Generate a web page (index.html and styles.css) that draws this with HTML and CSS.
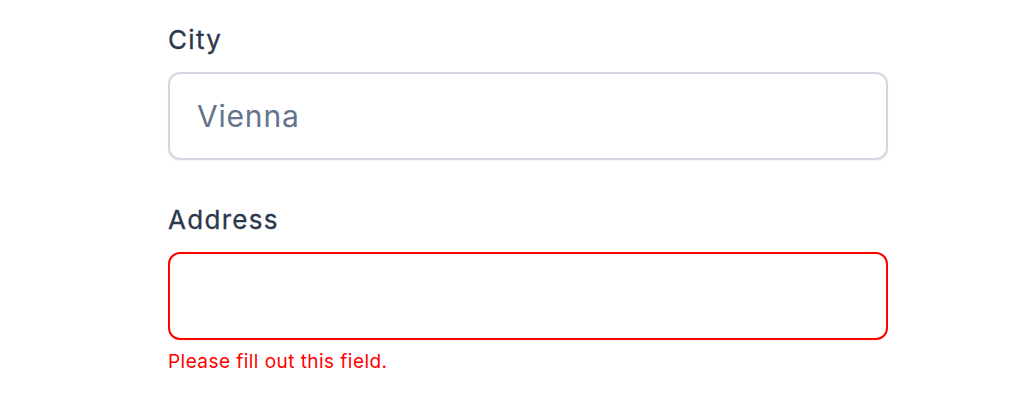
FILE: index.html
```html
<!DOCTYPE html>
<html>
<head>
<meta charset="utf-8">
<link rel="stylesheet" href="styles.css">
</head>
<body>
<form class="form">
  <div class="field">
    <label class="label" for="city">City</label>
    <input class="input" id="city" type="text" value="Vienna">
  </div>
  <div class="field">
    <label class="label" for="address">Address</label>
    <input class="input input-error" id="address" type="text">
    <p class="error">Please fill out this field.</p>
  </div>
</form>
</body>
</html>
```
FILE: styles.css
```css
html, body {
  margin: 0;
  padding: 0;
  background: #ffffff;
}
body {
  font-family: Inter, "Noto Sans", sans-serif;
}
.form {
  width: 720px;
  margin: 0 auto 0 168px;
  padding-top: 22px;
  display: flex;
  flex-direction: column;
  gap: 42px;
}
.field {
  display: flex;
  flex-direction: column;
}
.label {
  font-size: 26px;
  line-height: 36px;
  font-weight: 400;
  letter-spacing: 1.3px;
  color: #2b374b;
  -webkit-text-stroke: 0.3px #2b374b;
  margin-bottom: 14px;
}
.input {
  box-sizing: border-box;
  width: 720px;
  height: 88px;
  border: 2px solid #d6d6e0;
  border-radius: 12px;
  padding: 0 27px;
  font-family: Inter, "Noto Sans", sans-serif;
  font-size: 30px;
  letter-spacing: 0.8px;
  color: #64748b;
  background: #fff;
  box-shadow: 0 1px 2px rgba(0,0,0,0.06);
  outline: none;
}
.input-error {
  border: 2px solid #ff0000;
}
.error {
  margin: 8px 0 0;
  font-size: 19px;
  line-height: 27px;
  letter-spacing: 0.45px;
  color: #ff0000;
}
```
